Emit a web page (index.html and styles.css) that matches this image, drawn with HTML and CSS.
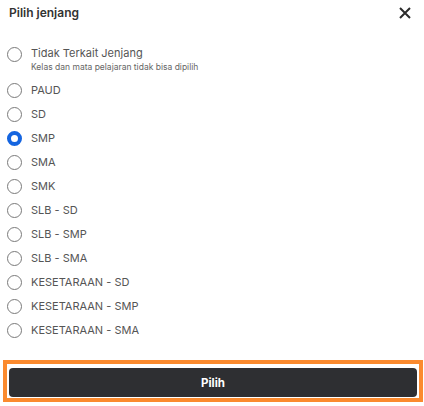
FILE: index.html
```html
<!DOCTYPE html>
<html>
<head>
<meta charset="utf-8">
<link rel="stylesheet" href="styles.css">
</head>
<body>
<div class="modal">
  <div class="header">
    <div class="title">Pilih jenjang</div>
    <svg class="close" width="12" height="12" viewBox="0 0 12 12"><path d="M1 1L11 11M11 1L1 11" stroke="#2b2b2b" stroke-width="2"/></svg>
  </div>
  <div class="list">
    <div class="item first">
      <span class="radio"></span>
      <div class="text">
        <div class="label">Tidak Terkait Jenjang</div>
        <div class="sub">Kelas dan mata pelajaran tidak bisa dipilih</div>
      </div>
    </div>
    <div class="item"><span class="radio"></span><div class="label">PAUD</div></div>
    <div class="item"><span class="radio"></span><div class="label">SD</div></div>
    <div class="item"><span class="radio checked"></span><div class="label">SMP</div></div>
    <div class="item"><span class="radio"></span><div class="label">SMA</div></div>
    <div class="item"><span class="radio"></span><div class="label">SMK</div></div>
    <div class="item"><span class="radio"></span><div class="label">SLB - SD</div></div>
    <div class="item"><span class="radio"></span><div class="label">SLB - SMP</div></div>
    <div class="item"><span class="radio"></span><div class="label">SLB - SMA</div></div>
    <div class="item"><span class="radio"></span><div class="label">KESETARAAN - SD</div></div>
    <div class="item"><span class="radio"></span><div class="label">KESETARAAN - SMP</div></div>
    <div class="item"><span class="radio"></span><div class="label">KESETARAAN - SMA</div></div>
  </div>
  <div class="footer">
    <div class="focus">
      <button class="btn">Pilih</button>
    </div>
  </div>
</div>
</body>
</html>
```
FILE: styles.css
```css
* { box-sizing: border-box; }
html, body { margin: 0; padding: 0; background: #fff; }
body { font-family: Inter, "Noto Sans", sans-serif; color: #3a3a3a; width: 424px; }
.modal { width: 424px; }
.header {
  display: flex;
  align-items: center;
  justify-content: space-between;
  height: 26px;
  padding: 0 13px 0 9px;
}
.title { font-size: 12px; font-weight: 600; color: #333; line-height: 26px; }
.close { display: block; }
.list { padding: 19px 0 0 7px; display: flex; flex-direction: column; }
.item {
  display: flex;
  align-items: center;
  gap: 9px;
  height: 24px;
}
.item.first { align-items: flex-start; height: auto; margin-bottom: 5px; }
.item.first .radio { margin-top: 1.5px; }
.radio {
  width: 15px;
  height: 15px;
  border-radius: 50%;
  border: 1px solid #7a7a7a;
  flex: none;
}
.radio.checked { border: 4px solid #1565e0; }
.label { font-size: 11px; line-height: 16px; color: #555; }
.sub { font-size: 8.5px; line-height: 12px; color: #666; }
.footer { padding: 18px 1px 4px 3px; }
.focus {
  border: 4px solid #fb8a2e;
  padding: 4px 2px 1px 2px;
}
.btn {
  display: block;
  width: 100%;
  height: 29px;
  border: none;
  border-radius: 4px;
  background: #2e2f32;
  color: #fff;
  font-family: Inter, "Noto Sans", sans-serif;
  font-weight: 700;
  font-size: 11.5px;
}
```
